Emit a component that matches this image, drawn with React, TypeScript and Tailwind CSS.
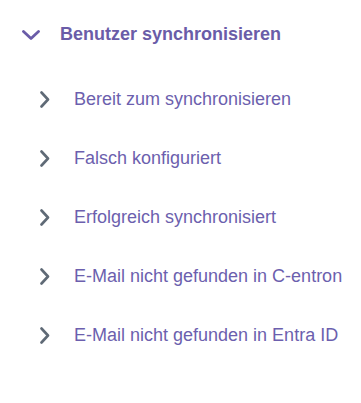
import React from "react";

const items = [
  "Bereit zum synchronisieren",
  "Falsch konfiguriert",
  "Erfolgreich synchronisiert",
  "E-Mail nicht gefunden in C-entron",
  "E-Mail nicht gefunden in Entra ID",
];

export default function App() {
  return (
    <div className="w-[361px] h-[403px] bg-white font-['Liberation_Sans',Arial,sans-serif]">
      <div className="flex items-center h-[68px]">
        <div className="w-[60px] flex justify-start pl-[22px] pt-[1px]">
          <svg width="18" height="10" viewBox="0 0 18 10" fill="none">
            <path d="M1.5 1.5 L9 8.5 L16.5 1.5" stroke="#6a5ca8" strokeWidth="2.8" strokeLinecap="round" strokeLinejoin="round" />
          </svg>
        </div>
        <span className="text-[18px] font-bold text-[#6a5ca8]">Benutzer synchronisieren</span>
      </div>
      <div className="flex flex-col pt-[2px]">
        {items.map((t) => (
          <div key={t} className="flex items-center h-[59px]">
            <div className="w-[74px] pl-[40px] flex">
              <svg width="10" height="17" viewBox="0 0 10 17" fill="none">
                <path d="M1.5 1.5 L8 8.5 L1.5 15.5" stroke="#5f6a76" strokeWidth="2.6" strokeLinecap="round" strokeLinejoin="round" />
              </svg>
            </div>
            <span className="text-[18px] text-[#6c5fae]">{t}</span>
          </div>
        ))}
      </div>
    </div>
  );
}
